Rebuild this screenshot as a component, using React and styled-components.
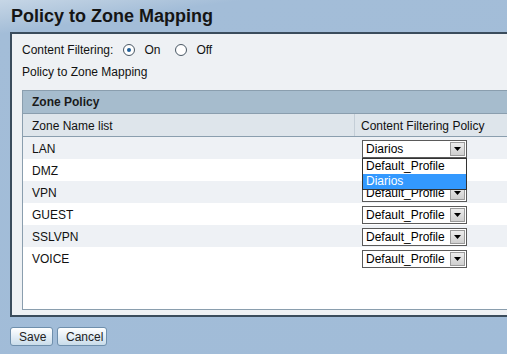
import React from "react";
import styled, { createGlobalStyle } from "styled-components";

const zones = ["LAN", "DMZ", "VPN", "GUEST", "SSLVPN", "VOICE"];

const App = () => {
  return (
    <>
      <Global />
      <Page>
        <Title>Policy to Zone Mapping</Title>
        <Panel>
          <FilterRow>
            <span>Content Filtering:</span>
            <Radio checked />
            <RadioLabel>On</RadioLabel>
            <Radio />
            <RadioLabel>Off</RadioLabel>
          </FilterRow>
          <SubTitle>Policy to Zone Mapping</SubTitle>
          <Table>
            <Caption>Zone Policy</Caption>
            <HeadRow>
              <NameCell>Zone Name list</NameCell>
              <PolicyCell>Content Filtering Policy</PolicyCell>
            </HeadRow>
            {zones.map((z, i) => (
              <Row key={z} odd={i % 2 === 0}>
                <NameCell>{z}</NameCell>
                <PolicyCell>
                  <Select>
                    <span>{i === 0 ? "Diarios" : "Default_Profile"}</span>
                    <Arrow>
                      <svg width="7" height="4" viewBox="0 0 7 4">
                        <path d="M0 0h7L3.5 4z" fill="#000" />
                      </svg>
                    </Arrow>
                    {i === 0 && (
                      <List>
                        <Option>Default_Profile</Option>
                        <Option active>Diarios</Option>
                      </List>
                    )}
                  </Select>
                </PolicyCell>
              </Row>
            ))}
            <Filler />
          </Table>
        </Panel>
        <Buttons>
          <Button>Save</Button>
          <Button>Cancel</Button>
        </Buttons>
      </Page>
    </>
  );
};

export default App;

const Global = createGlobalStyle`
  html, body {
    margin: 0;
    padding: 0;
    overflow: hidden;
  }
  body {
    width: 507px;
    height: 354px;
    font-family: "Liberation Sans", Arial, sans-serif;
    background: linear-gradient(172deg, #c6d6e6 0px, #b4c9de 18px, #a3bdd8 34px, #a1bcd8 100%);
  }
`;

const Page = styled.div`
  padding-left: 10px;
  width: 540px;
`;

const Title = styled.div`
  height: 32px;
  box-sizing: border-box;
  padding-top: 6px;
  padding-left: 1px;
  font-size: 18px;
  font-weight: bold;
  color: #151515;
  line-height: 20px;
`;

const Panel = styled.div`
  background: #eef1f4;
  border-top: 2px solid #3a4c5c;
  border-left: 2px solid #3a4c5c;
  border-bottom: 2px solid #3a4c5c;
  box-sizing: border-box;
  height: 285px;
  padding: 0 0 0 10px;
  display: flex;
  flex-direction: column;
`;

const FilterRow = styled.div`
  height: 31px;
  display: flex;
  align-items: center;
  font-size: 12px;
  color: #111;
  & > span:first-child {
    margin-right: 10px;
  }
`;

const Radio = styled.span`
  width: 10px;
  height: 10px;
  border-radius: 50%;
  border: 1px solid #4c5a66;
  background: radial-gradient(circle, #ffffff 60%, #e2e6ea 100%);
  position: relative;
  margin-right: 9px;
  &::after {
    content: "";
    display: ${(p) => (p.checked ? "block" : "none")};
    position: absolute;
    left: 3px;
    top: 3px;
    width: 4px;
    height: 4px;
    border-radius: 50%;
    background: #1e5f99;
  }
`;

const RadioLabel = styled.span`
  margin-right: 15px;
`;

const SubTitle = styled.div`
  font-size: 12px;
  line-height: 16px;
  color: #111;
  margin-top: -1px;
`;

const Table = styled.div`
  margin-top: 10px;
  border: 1px solid #8a9eae;
  border-right: none;
  background: #fff;
  flex: 1;
  margin-bottom: 5px;
  display: flex;
  flex-direction: column;
  font-size: 12px;
  color: #111;
`;

const Caption = styled.div`
  height: 22px;
  background: #a6bccd;
  border-bottom: 1px solid #8a9eae;
  font-weight: bold;
  line-height: 23px;
  padding-left: 9px;
  color: #1a1a1a;
`;

const HeadRow = styled.div`
  height: 22px;
  display: flex;
  background: #dee5eb;
  border-bottom: 1px solid #8a9eae;
`;

const Row = styled.div`
  height: 22px;
  display: flex;
  background: ${(p) => (p.odd ? "#eef1f5" : "#fff")};
`;

const NameCell = styled.div`
  width: 332px;
  padding-left: 9px;
  padding-top: 1px;
  box-sizing: border-box;
  display: flex;
  align-items: center;
  border-right: 1px solid #c4ced7;
  ${Row} & {
    border-right: none;
    width: 333px;
  }
`;

const PolicyCell = styled.div`
  flex: 1;
  display: flex;
  align-items: center;
  padding-left: 6px;
  padding-top: 1px;
`;

const Select = styled.div`
  position: relative;
  width: 105px;
  height: 18px;
  box-sizing: border-box;
  border: 1px solid #5a5a5a;
  background: #fff;
  display: flex;
  align-items: center;
  justify-content: space-between;
  font-size: 12px;
  padding-left: 3px;
  color: #000;
`;

const Arrow = styled.span`
  width: 15px;
  height: 14px;
  margin-right: 1px;
  box-sizing: border-box;
  border: 1px solid #9a9a9a;
  background: linear-gradient(#ececec, #cfcfcf);
  display: flex;
  align-items: center;
  justify-content: center;
`;

const List = styled.div`
  position: absolute;
  left: -1px;
  top: 17px;
  width: 105px;
  box-sizing: border-box;
  border: 1px solid #333;
  background: #fff;
  z-index: 2;
`;

const Option = styled.div`
  height: 15px;
  line-height: 15px;
  padding-left: 3px;
  font-size: 12px;
  background: ${(p) => (p.active ? "#3399ff" : "#fff")};
  color: ${(p) => (p.active ? "#fff" : "#000")};
`;

const Filler = styled.div`
  flex: 1;
  background: #fff;
`;

const Buttons = styled.div`
  display: flex;
  gap: 4px;
  margin-top: 10px;
`;

const Button = styled.button`
  height: 19px;
  padding: 0 8px;
  font-family: "Liberation Sans", Arial, sans-serif;
  font-size: 12px;
  color: #222;
  border: 1px solid #6f8fac;
  border-radius: 3px;
  background: linear-gradient(#ffffff, #e4eef6 50%, #c9dcea);
  line-height: 16px;
  &:first-child {
    width: 43px;
  }
  &:last-child {
    width: 50px;
  }
`;
